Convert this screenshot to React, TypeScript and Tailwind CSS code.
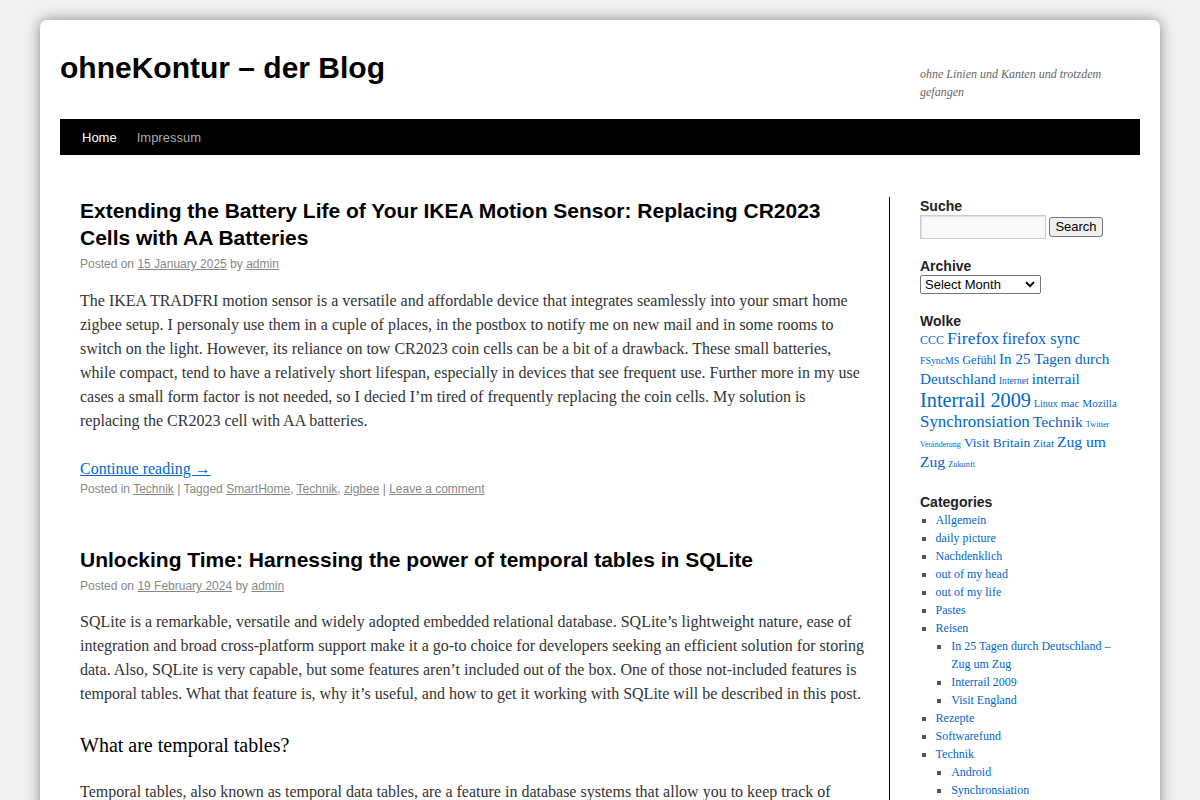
import React from "react";

const sans = "font-['Liberation_Sans',Arial,sans-serif]";
const serif = "font-['Liberation_Serif',Georgia,serif]";

const tags: [string, string][] = [
  ["CCC", "text-[12px]"],
  ["Firefox", "text-[17.7px]"],
  ["firefox sync", "text-[16.2px]"],
  ["FSyncMS", "text-[9.8px]"],
  ["Gefühl", "text-[12.2px]"],
  ["In 25 Tagen durch Deutschland", "text-[15.2px]"],
  ["Internet", "text-[9.6px]"],
  ["interrail", "text-[15.2px]"],
  ["Interrail 2009", "text-[20.3px]"],
  ["Linux", "text-[10px]"],
  ["mac", "text-[11.1px]"],
  ["Mozilla", "text-[11.1px]"],
  ["Synchronsiation", "text-[16.9px]"],
  ["Technik", "text-[15.6px]"],
  ["Twitter", "text-[8.2px]"],
  ["Veränderung", "text-[8px]"],
  ["Visit Britain", "text-[13.5px]"],
  ["Zitat", "text-[11px]"],
  ["Zug um Zug", "text-[15.6px]"],
  ["Zukunft", "text-[8.4px]"],
];

type Cat = { name: string; children?: string[] };
const cats: Cat[] = [
  { name: "Allgemein" },
  { name: "daily picture" },
  { name: "Nachdenklich" },
  { name: "out of my head" },
  { name: "out of my life" },
  { name: "Pastes" },
  {
    name: "Reisen",
    children: ["In 25 Tagen durch Deutschland – Zug um Zug", "Interrail 2009", "Visit England"],
  },
  { name: "Rezepte" },
  { name: "Softwarefund" },
  { name: "Technik", children: ["Android", "Synchronsiation"] },
];

function MetaLink({ children }: { children: React.ReactNode }) {
  return <a className="text-[#888] underline">{children}</a>;
}

function WidgetTitle({ children }: { children: React.ReactNode }) {
  return <h3 className={`${sans} text-[14px] leading-[18px] font-bold text-[#222]`}>{children}</h3>;
}

export default function App() {
  return (
    <div className="min-h-screen bg-[#f1f1f1] pt-5 pb-10">
      <div className="mx-auto w-[1120px] rounded-[7px] bg-white px-5 pb-10 shadow-[0_0_14px_rgba(0,0,0,0.45)]">
        {/* Header */}
        <header className="flex items-start justify-between pt-[30px]">
          <h1 className={`${sans} text-[30px] leading-[36px] font-bold text-black`}>ohneKontur – der Blog</h1>
          <p className={`${serif} mt-[15px] mb-[18px] w-[220px] text-[12px] leading-[18px] italic text-[#666]`}>
            ohne Linien und Kanten und trotzdem gefangen
          </p>
        </header>

        {/* Nav */}
        <nav className="h-9 bg-black">
          <ul className={`${sans} ml-3 flex pt-px text-[13px] leading-[35px]`}>
            <li>
              <a className="block px-2.5 text-white">Home</a>
            </li>
            <li>
              <a className="block px-2.5 text-[#aaa]">Impressum</a>
            </li>
          </ul>
        </nav>

        {/* Main */}
        <div className="flex pt-[42px]">
          <main className="mx-5 min-w-0 flex-1">
            <article className="mb-12">
              <h2 className={`${sans} text-[21px] leading-[27px] font-bold text-black`}>
                Extending the Battery Life of Your IKEA Motion Sensor: Replacing CR2023 Cells with AA Batteries
              </h2>
              <div className={`${sans} mt-[4px] text-[12px] leading-[18px] text-[#888]`}>
                Posted on <MetaLink>15 January 2025</MetaLink> by <MetaLink>admin</MetaLink>
              </div>
              <div className={`${serif} mt-[16px] text-[16px] leading-[24px] text-[#333]`}>
                <p className="mb-6">
                  The IKEA TRADFRI motion sensor is a versatile and affordable device that integrates seamlessly into
                  your smart home zigbee setup. I personaly use them in a cuple of places, in the postbox to notify me on
                  new mail and in some rooms to switch on the light. However, its reliance on tow CR2023 coin cells can
                  be a bit of a drawback. These small batteries, while compact, tend to have a relatively short lifespan,
                  especially in devices that see frequent use. Further more in my use cases a small form factor is not
                  needed, so I decied I’m tired of frequently replacing the coin cells. My solution is replacing the
                  CR2023 cell with AA batteries.
                </p>
                <p>
                  <a className="text-[#0066cc] underline">Continue reading →</a>
                </p>
              </div>
              <div className={`${sans} -mt-px text-[12px] leading-[18px] text-[#888]`}>
                Posted in <MetaLink>Technik</MetaLink> | Tagged <MetaLink>SmartHome</MetaLink>,{" "}
                <MetaLink>Technik</MetaLink>, <MetaLink>zigbee</MetaLink> | <MetaLink>Leave a comment</MetaLink>
              </div>
            </article>

            <article>
              <h2 className={`${sans} text-[21px] leading-[27px] font-bold text-black`}>
                Unlocking Time: Harnessing the power of temporal tables in SQLite
              </h2>
              <div className={`${sans} mt-[4px] text-[12px] leading-[18px] text-[#888]`}>
                Posted on <MetaLink>19 February 2024</MetaLink> by <MetaLink>admin</MetaLink>
              </div>
              <div className={`${serif} mt-[15px] text-[16px] leading-[24px] text-[#333]`}>
                <p className="mb-6">
                  SQLite is a remarkable, versatile and widely adopted embedded relational database. SQLite’s
                  lightweight nature, ease of integration and broad cross-platform support make it a go-to choice for
                  developers seeking an efficient solution for storing data. Also, SQLite is very capable, but some
                  features aren’t included out of the box. One of those not-included features is temporal tables. What
                  that feature is, why it’s useful, and how to get it working with SQLite will be described in this
                  post.
                </p>
                <h3 className="mb-5 text-[20px] leading-[30px] font-normal text-black">What are temporal tables?</h3>
                <p className="mb-6">
                  Temporal tables, also known as temporal data tables, are a feature in database systems that allow you
                  to keep track of changes to data over time. Instead of only storing the current state of a row, a
                  temporal table also keeps the history of every version of that row.
                </p>
              </div>
            </article>
          </main>

          {/* Sidebar */}
          <aside className="w-[251px] flex-none border-l border-black pr-[20px] pl-[30px]">
            <div className="mb-[18px]">
              <WidgetTitle>Suche</WidgetTitle>
              <div className="flex items-center gap-[3px]">
                <input
                  type="text"
                  className="h-6 w-[126px] border border-[#ccc] bg-[#f9f9f9] shadow-[inset_1px_1px_1px_rgba(0,0,0,0.1)]"
                />
                <button
                  className={`${sans} h-5 w-[54px] rounded-[3px] border border-[#767676] bg-[#efefef] text-[13px] leading-[18px] text-black`}
                >
                  Search
                </button>
              </div>
            </div>

            <div className="mb-[18px]">
              <WidgetTitle>Archive</WidgetTitle>
              <div className="relative h-[19px] w-[121px]">
                <select
                  className={`${sans} block h-[19px] w-[121px] appearance-none rounded-[2px] border border-[#767676] bg-white pl-[4px] text-[13px] leading-[17px] text-black`}
                >
                  <option>Select Month</option>
                </select>
                <svg
                  className="pointer-events-none absolute top-[6px] right-[6px]"
                  width="10"
                  height="7"
                  viewBox="0 0 10 7"
                >
                  <path d="M1 1.2 L5 5.2 L9 1.2" fill="none" stroke="#000" strokeWidth="1.9" />
                </svg>
              </div>
            </div>

            <div className="mb-[20px]">
              <WidgetTitle>Wolke</WidgetTitle>
              <div className={`${serif} text-[12px] leading-[20px] text-[#0066cc]`}>
                {tags.map(([t, s], i) => (
                  <React.Fragment key={t}>
                    <a className={`${s} leading-none`}>{t}</a>
                    {i < tags.length - 1 ? " " : ""}
                  </React.Fragment>
                ))}
              </div>
            </div>

            <div className="mb-[18px]">
              <WidgetTitle>Categories</WidgetTitle>
              <ul className={`${serif} ml-[1.3em] list-[square] text-[12px] leading-[18px] text-[#555]`}>
                {cats.map((c) => (
                  <li key={c.name}>
                    <a className="text-[#0066cc]">{c.name}</a>
                    {c.children && (
                      <ul className="ml-[1.3em] list-[square]">
                        {c.children.map((ch) => (
                          <li key={ch}>
                            <a className="text-[#0066cc]">{ch}</a>
                          </li>
                        ))}
                      </ul>
                    )}
                  </li>
                ))}
              </ul>
            </div>
          </aside>
        </div>
      </div>
    </div>
  );
}
